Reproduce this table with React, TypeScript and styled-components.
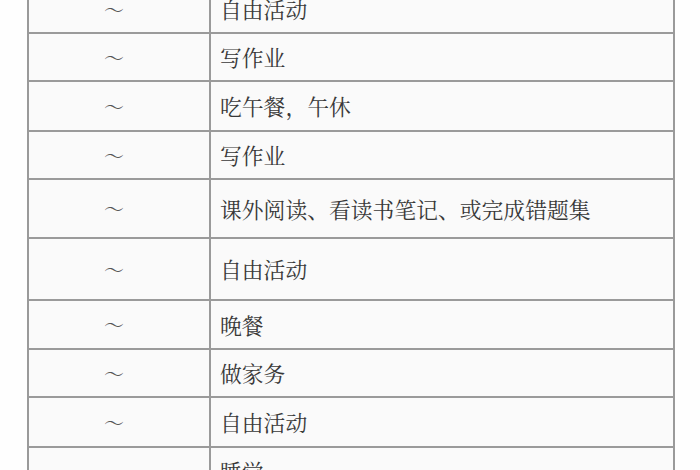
import React from "react";
import styled, { createGlobalStyle } from "styled-components";

const Global = createGlobalStyle`
  html, body {
    margin: 0;
    padding: 0;
    background: #fefefe;
    overflow: hidden;
  }
  body {
    width: 700px;
    height: 470px;
  }
`;

const Page = styled.div`
  width: 700px;
  height: 470px;
  overflow: hidden;
  padding-left: 27px;
  box-sizing: border-box;
`;

const Table = styled.table`
  margin-top: -16px;
  border-collapse: collapse;
  width: 648px;
  table-layout: fixed;
  background: #fafafa;
  font-family: "Noto Serif CJK SC", "Noto Sans CJK SC", "Liberation Serif", serif;
  color: #383838;
`;

const Row = styled.tr<{ $h: number }>`
  height: ${(p) => p.$h}px;
`;

const TimeCell = styled.td`
  width: 170px;
  border: 2px solid #9a9a9a;
  text-align: center;
  vertical-align: middle;
  padding: 0 10px 0 0;
  font-size: 20px;
  color: #555;
`;

const TaskCell = styled.td`
  border: 2px solid #9a9a9a;
  padding: 0 0 0 9px;
  vertical-align: middle;
  font-size: 21.8px;
  line-height: 1;
  white-space: nowrap;
`;

const rows: [number, string][] = [
  [48, "自由活动"],
  [48, "写作业"],
  [50, "吃午餐，午休"],
  [48, "写作业"],
  [59, "课外阅读、看读书笔记、或完成错题集"],
  [62, "自由活动"],
  [49, "晚餐"],
  [48, "做家务"],
  [50, "自由活动"],
  [48, "睡觉"],
];

export default function App() {
  return (
    <Page>
      <Global />
      <Table>
        <tbody>
          {rows.map(([h, t], i) => (
            <Row key={i} $h={h}>
              <TimeCell>～</TimeCell>
              <TaskCell>{t}</TaskCell>
            </Row>
          ))}
        </tbody>
      </Table>
    </Page>
  );
}
